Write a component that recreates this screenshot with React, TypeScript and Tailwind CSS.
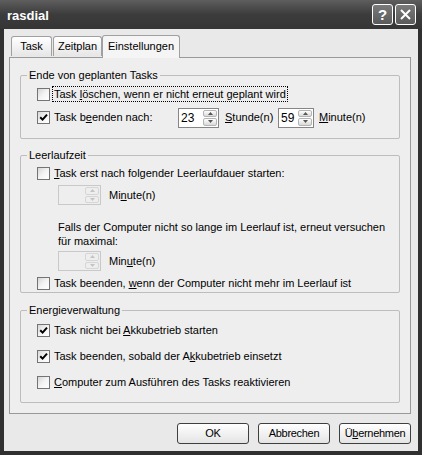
import React from "react";

const U = ({ children }: { children: React.ReactNode }) => (
  <span className="underline decoration-1 underline-offset-[1px]">{children}</span>
);

function Box({ checked }: { checked?: boolean }) {
  return (
    <span className="w-[13px] h-[13px] shrink-0 border border-[#747474] bg-gradient-to-br from-[#d6d6d6] via-[#f4f4f4] to-white flex items-center justify-center">
      {checked && (
        <svg width="9" height="9" viewBox="0 0 9 9">
          <path d="M1.2 4.2 L3.6 6.6 L8 1.6" stroke="#000" strokeWidth="2" fill="none" />
        </svg>
      )}
    </span>
  );
}

function Arrow({ up, disabled }: { up?: boolean; disabled?: boolean }) {
  return (
    <div
      className={`flex-1 rounded-[2px] border flex items-center justify-center ${
        disabled ? "border-[#d6d6d6] bg-[#eeeeee]" : "border-[#b4b4b4] bg-gradient-to-b from-white to-[#d9d9d9]"
      }`}
    >
      <svg width="5" height="3" viewBox="0 0 5 3">
        <path d={up ? "M0 3 L2.5 0 L5 3Z" : "M0 0 L2.5 3 L5 0Z"} fill={disabled ? "#c4c4c4" : "#555"} />
      </svg>
    </div>
  );
}

function Spin({ value, className, disabled }: { value?: string; className: string; disabled?: boolean }) {
  return (
    <div
      className={`flex h-[20px] border ${className} ${
        disabled ? "border-[#c9c9c9] bg-[#eeeeee]" : "border-[#858585] bg-white"
      }`}
    >
      <span className="pl-[2px] text-[12px] leading-[18px]">{value}</span>
      <div className="ml-auto w-[16px] flex flex-col gap-[1px] p-[1px]">
        <Arrow up disabled={disabled} />
        <Arrow disabled={disabled} />
      </div>
    </div>
  );
}

function Group({ title, className, children }: { title: string; className: string; children: React.ReactNode }) {
  return (
    <div className={`relative mx-[10px] border border-[#bdbdbd] rounded-[2px] ${className}`}>
      <span className="absolute -top-[8px] left-[6px] px-[2px] bg-[#eeeeee] leading-[14px]">{title}</span>
      {children}
    </div>
  );
}

function Btn({ children }: { children: React.ReactNode }) {
  return (
    <div className="w-[72px] h-[21px] rounded-[3px] border border-[#3f3f3f] bg-gradient-to-b from-white to-[#e4e4e4] flex items-center justify-center tracking-[-0.3px]">
      {children}
    </div>
  );
}

export default function App() {
  return (
    <div className="w-[422px] h-[455px] bg-[#303030] flex flex-col font-['Liberation_Sans',Arial,sans-serif] text-[11px] text-black">
      {/* title bar */}
      <div className="h-[29px] shrink-0 flex items-center pl-[7px] pr-[6px] bg-gradient-to-b from-[#5e5e5e] via-[#3c3c3c] to-[#353535]">
        <span className="text-white font-bold text-[13px] pt-[2px]">rasdial</span>
        <div className="ml-auto flex gap-[2px]">
          <div className="w-[21px] h-[21px] rounded-[3px] border border-white bg-gradient-to-b from-[#7a7a7a] to-[#5a5a5a] flex items-center justify-center text-white font-bold text-[15px] leading-none">
            ?
          </div>
          <div className="w-[21px] h-[21px] rounded-[3px] border border-white bg-gradient-to-b from-[#7a7a7a] to-[#5a5a5a] flex items-center justify-center">
            <svg width="11" height="11" viewBox="0 0 11 11">
              <path d="M1 1 L10 10 M10 1 L1 10" stroke="#fff" strokeWidth="2" />
            </svg>
          </div>
        </div>
      </div>

      {/* client */}
      <div className="flex-1 mx-[4px] mb-[4px] bg-[#e9e9e9] flex flex-col">
        {/* tabs */}
        <div className="flex items-end pl-[7px] pt-[6px] h-[28px] relative z-10">
          <div className="w-[41px] h-[20px] border border-b-0 border-[#a0a0a0] rounded-t-[3px] bg-gradient-to-b from-white to-[#e6e6e6] flex items-center justify-center mb-[1px]">
            Task
          </div>
          <div className="w-[49px] h-[20px] border border-b-0 border-[#a0a0a0] rounded-t-[3px] bg-gradient-to-b from-white to-[#e6e6e6] flex items-center justify-center mb-[1px] ml-[1px]">
            Zeitplan
          </div>
          <div className="w-[78px] h-[23px] border border-b-0 border-[#a0a0a0] rounded-t-[3px] bg-[#f5f5f5] flex items-center justify-center -mb-[1px] pb-[1px]">
            Einstellungen
          </div>
        </div>

        {/* panel */}
        <div className="ml-[5px] mr-[7px] h-[357px] border border-[#999999] bg-[#eeeeee] flex flex-col">
          <Group title="Ende von geplanten Tasks" className="mt-[17px] h-[64px] pt-[10px] pl-[16px]">
            <div className="flex items-center h-[16px]">
              <Box />
              <span className="ml-[2px] px-[1px] border border-dotted border-black leading-[14px]">
                Task <U>l</U>öschen, wenn er nicht erneut geplant wird
              </span>
            </div>
            <div className="flex items-center h-[21px] mt-[5px]">
              <Box checked />
              <span className="ml-[4px] w-[124px]">
                Task b<U>e</U>enden nach:
              </span>
              <Spin value="23" className="w-[41px]" />
              <span className="ml-[6px] w-[53px]">
                <U>S</U>tunde(n)
              </span>
              <Spin value="59" className="w-[36px]" />
              <span className="ml-[5px]">
                <U>M</U>inute(n)
              </span>
            </div>
          </Group>

          <Group title="Leerlaufzeit" className="mt-[16px] h-[138px] pt-[9px] pl-[16px]">
            <div className="flex items-center h-[16px]">
              <Box />
              <span className="ml-[4px]">
                <U>T</U>ask erst nach folgender Leerlaufdauer starten:
              </span>
            </div>
            <div className="flex items-center mt-[4px] ml-[21px]">
              <Spin className="w-[43px] h-[19px]" disabled />
              <span className="ml-[8px]">
                Mi<U>n</U>ute(n)
              </span>
            </div>
            <div className="mt-[15px] ml-[21px] leading-[14px] w-[330px]">
              Falls der Computer nicht so lange im Leerlauf ist, erneut versuchen für maximal:
            </div>
            <div className="flex items-center mt-[3px] ml-[21px]">
              <Spin className="w-[43px] h-[19px]" disabled />
              <span className="ml-[8px]">
                Min<U>u</U>te(n)
              </span>
            </div>
            <div className="flex items-center h-[16px] mt-[4px]">
              <Box />
              <span className="ml-[4px]">
                Task beenden, <U>w</U>enn der Computer nicht mehr im Leerlauf ist
              </span>
            </div>
          </Group>

          <Group title="Energieverwaltung" className="mt-[17px] h-[93px] pt-[11px] pl-[16px] flex flex-col gap-[10px]">
            <div className="flex items-center h-[16px]">
              <Box checked />
              <span className="ml-[4px]">
                Task nicht bei <U>A</U>kkubetrieb starten
              </span>
            </div>
            <div className="flex items-center h-[16px]">
              <Box checked />
              <span className="ml-[4px]">
                Task beenden, sobald der A<U>k</U>kubetrieb einsetzt
              </span>
            </div>
            <div className="flex items-center h-[16px]">
              <Box />
              <span className="ml-[4px]">
                <U>C</U>omputer zum Ausführen des Tasks reaktivieren
              </span>
            </div>
          </Group>
        </div>

        {/* buttons */}
        <div className="flex justify-end gap-[9px] mt-[9px] pr-[7px]">
          <Btn>OK</Btn>
          <Btn>Abbrechen</Btn>
          <Btn>
            <span>
              Ü<U>b</U>ernehmen
            </span>
          </Btn>
        </div>
      </div>
    </div>
  );
}
